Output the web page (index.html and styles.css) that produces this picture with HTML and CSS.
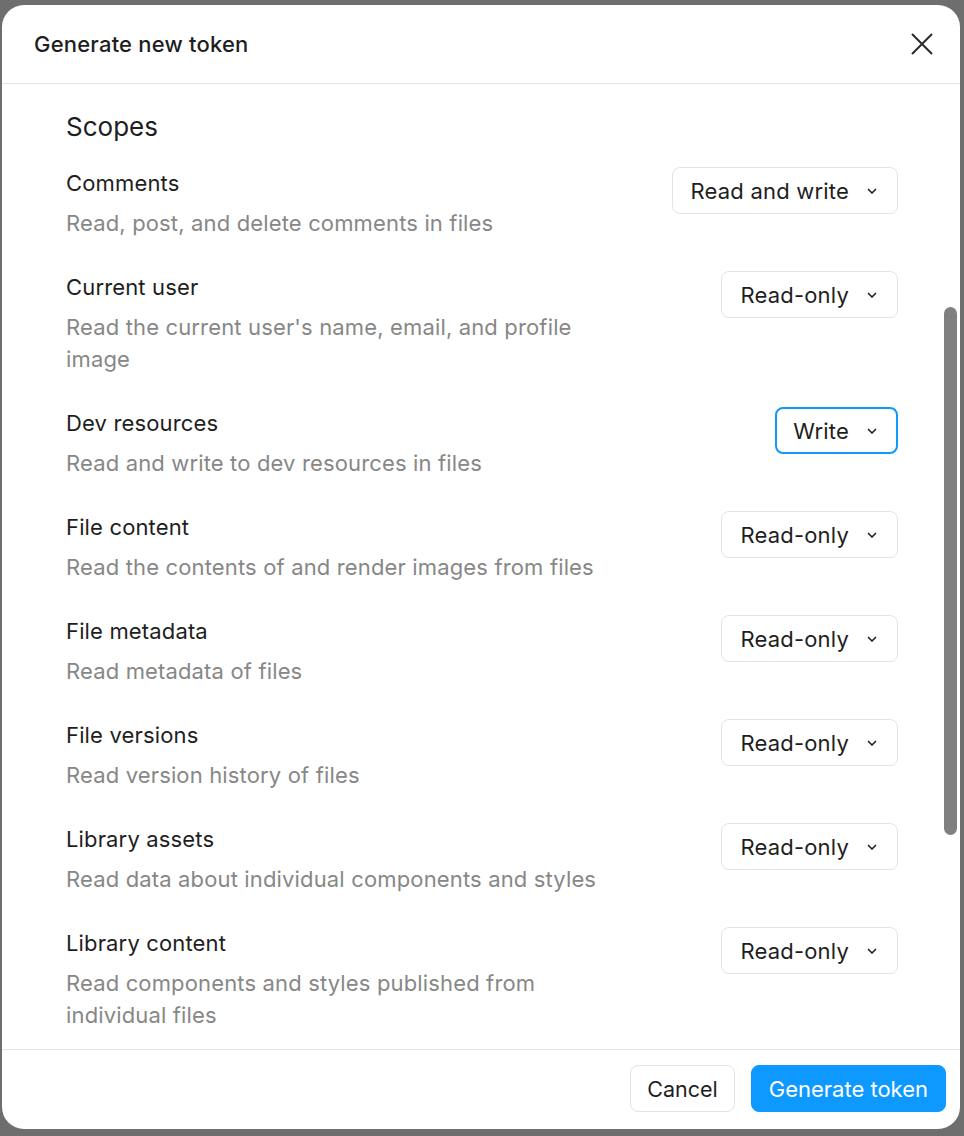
FILE: index.html
```html
<!DOCTYPE html>
<html lang="en">
<head>
<meta charset="utf-8">
<title>Generate new token</title>
<link rel="stylesheet" href="styles.css">
</head>
<body>
<div class="dialog">
  <header class="dialog-header">
    <h1 class="dialog-title">Generate new token</h1>
    <button class="close-btn" aria-label="Close">
      <svg width="22" height="22" viewBox="0 0 22 22"><path d="M1 1L21 21M21 1L1 21" stroke="#2b2b2b" stroke-width="2" fill="none"/></svg>
    </button>
  </header>
  <main class="dialog-body">
    <h2 class="section-title">Scopes</h2>
    <div class="scope-list">
      <div class="scope-row">
        <div class="scope-text">
          <div class="scope-name">Comments</div>
          <div class="scope-desc">Read, post, and delete comments in files</div>
        </div>
        <button class="select">Read and write<svg class="chev" width="10" height="6" viewBox="0 0 10 6"><path d="M1 1L5 5L9 1" stroke="#1a1a1a" stroke-width="1.5" fill="none"/></svg></button>
      </div>
      <div class="scope-row">
        <div class="scope-text">
          <div class="scope-name">Current user</div>
          <div class="scope-desc">Read the current user's name, email, and profile image</div>
        </div>
        <button class="select">Read-only<svg class="chev" width="10" height="6" viewBox="0 0 10 6"><path d="M1 1L5 5L9 1" stroke="#1a1a1a" stroke-width="1.5" fill="none"/></svg></button>
      </div>
      <div class="scope-row">
        <div class="scope-text">
          <div class="scope-name">Dev resources</div>
          <div class="scope-desc">Read and write to dev resources in files</div>
        </div>
        <button class="select select-focus">Write<svg class="chev" width="10" height="6" viewBox="0 0 10 6"><path d="M1 1L5 5L9 1" stroke="#1a1a1a" stroke-width="1.5" fill="none"/></svg></button>
      </div>
      <div class="scope-row">
        <div class="scope-text">
          <div class="scope-name">File content</div>
          <div class="scope-desc">Read the contents of and render images from files</div>
        </div>
        <button class="select">Read-only<svg class="chev" width="10" height="6" viewBox="0 0 10 6"><path d="M1 1L5 5L9 1" stroke="#1a1a1a" stroke-width="1.5" fill="none"/></svg></button>
      </div>
      <div class="scope-row">
        <div class="scope-text">
          <div class="scope-name">File metadata</div>
          <div class="scope-desc">Read metadata of files</div>
        </div>
        <button class="select">Read-only<svg class="chev" width="10" height="6" viewBox="0 0 10 6"><path d="M1 1L5 5L9 1" stroke="#1a1a1a" stroke-width="1.5" fill="none"/></svg></button>
      </div>
      <div class="scope-row">
        <div class="scope-text">
          <div class="scope-name">File versions</div>
          <div class="scope-desc">Read version history of files</div>
        </div>
        <button class="select">Read-only<svg class="chev" width="10" height="6" viewBox="0 0 10 6"><path d="M1 1L5 5L9 1" stroke="#1a1a1a" stroke-width="1.5" fill="none"/></svg></button>
      </div>
      <div class="scope-row">
        <div class="scope-text">
          <div class="scope-name">Library assets</div>
          <div class="scope-desc">Read data about individual components and styles</div>
        </div>
        <button class="select">Read-only<svg class="chev" width="10" height="6" viewBox="0 0 10 6"><path d="M1 1L5 5L9 1" stroke="#1a1a1a" stroke-width="1.5" fill="none"/></svg></button>
      </div>
      <div class="scope-row">
        <div class="scope-text">
          <div class="scope-name">Library content</div>
          <div class="scope-desc">Read components and styles published from individual files</div>
        </div>
        <button class="select">Read-only<svg class="chev" width="10" height="6" viewBox="0 0 10 6"><path d="M1 1L5 5L9 1" stroke="#1a1a1a" stroke-width="1.5" fill="none"/></svg></button>
      </div>
    </div>
    <div class="scroll-thumb"></div>
  </main>
  <footer class="dialog-footer">
    <button class="btn btn-secondary">Cancel</button>
    <button class="btn btn-primary">Generate token</button>
  </footer>
</div>
</body>
</html>
```

FILE: styles.css
```css
* { box-sizing: border-box; }
html, body { height: 100%; }
body {
  margin: 0;
  padding: 5px 4px 7px 2px;
  background: #6e6e6e;
  font-family: Inter, "Noto Sans", "Liberation Sans", sans-serif;
  color: #1e1e1e;
}
.dialog {
  height: 100%;
  background: #fff;
  border-radius: 22px;
  display: flex;
  flex-direction: column;
  overflow: hidden;
}
.dialog-header {
  height: 79px;
  flex: none;
  display: flex;
  align-items: center;
  justify-content: space-between;
  padding: 0 27px 0 32px;
  border-bottom: 1px solid #e6e6e6;
}
.dialog-title {
  margin: 0;
  font-size: 22px;
  font-weight: 500;
  letter-spacing: 0.2px;
  color: #1e1e1e;
}
.close-btn {
  border: 0;
  background: none;
  padding: 0;
  width: 22px;
  height: 22px;
  display: flex;
}
.dialog-body {
  flex: 1;
  position: relative;
  overflow: hidden;
  padding: 27px 62px 0 64px;
}
.section-title {
  margin: 0 0 24px;
  font-size: 26px;
  line-height: 32px;
  font-weight: 400;
  color: #1e1e1e;
}
.scope-list {
  display: flex;
  flex-direction: column;
  gap: 32px;
}
.scope-row {
  display: flex;
  justify-content: space-between;
  align-items: flex-start;
  gap: 24px;
}
.scope-name {
  font-size: 22px;
  line-height: 32px;
  letter-spacing: 0.15px;
  color: #1e1e1e;
  margin-bottom: 8px;
}
.scope-desc {
  font-size: 22px;
  line-height: 32px;
  letter-spacing: 0.15px;
  color: #878787;
  max-width: 552px;
}
.select {
  flex: none;
  height: 47px;
  display: flex;
  align-items: center;
  gap: 18px;
  padding: 0 20px 0 18px;
  border: 1px solid #e3e3e3;
  border-radius: 8px;
  background: #fff;
  font-family: inherit;
  font-size: 22px;
  letter-spacing: 0.2px;
  color: #1e1e1e;
}
.select-focus {
  border: 2px solid #0d99ff;
  padding: 0 19px 0 16px;
}
.chev { flex: none; }
.scroll-thumb {
  position: absolute;
  right: 3px;
  top: 223px;
  width: 13px;
  height: 528px;
  border-radius: 7px;
  background: #808080;
}
.dialog-footer {
  flex: none;
  display: flex;
  justify-content: flex-end;
  gap: 16px;
  padding: 15px 14px 17px;
  border-top: 1px solid #e6e6e6;
}
.btn {
  height: 47px;
  border-radius: 8px;
  font-family: inherit;
  font-size: 22px;
  padding: 0 17px;
}
.btn-secondary {
  background: #fff;
  border: 1px solid #e3e3e3;
  color: #1e1e1e;
  padding: 0 16px;
  font-size: 21.5px;
}
.btn-primary {
  background: #0d99ff;
  border: 1px solid #0d99ff;
  color: #fff;
}
```
